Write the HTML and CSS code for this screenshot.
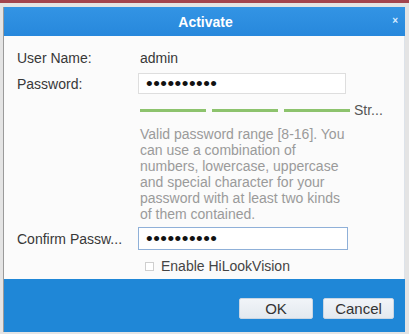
FILE: index.html
```html
<!DOCTYPE html>
<html>
<head>
<meta charset="utf-8">
<link rel="stylesheet" href="styles.css">
</head>
<body>
<div class="page">
  <div class="dialog">
    <div class="header">
      <span class="title">Activate</span>
      <span class="close">×</span>
    </div>
    <div class="content">
      <div class="row row-user">
        <span class="label">User Name:</span>
        <span class="value">admin</span>
      </div>
      <div class="row row-pass">
        <span class="label">Password:</span>
        <div class="input input-pass"><span class="dots">••••••••••</span></div>
      </div>
      <div class="row row-strength">
        <span class="label"></span>
        <div class="bars">
          <span class="bar"></span><span class="bar"></span><span class="bar"></span>
          <span class="str">Str...</span>
        </div>
      </div>
      <div class="row row-help">
        <span class="label"></span>
        <p class="help">Valid password range [8-16]. You<br>can use a combination of<br>numbers, lowercase, uppercase<br>and special character for your<br>password with at least two kinds<br>of them contained.</p>
      </div>
      <div class="row row-confirm">
        <span class="label">Confirm Passw...</span>
        <div class="input input-confirm"><span class="dots">••••••••••</span></div>
      </div>
      <div class="row row-enable">
        <span class="label"></span>
        <span class="check"></span>
        <span class="enable-text">Enable HiLookVision</span>
      </div>
    </div>
    <div class="footer">
      <button class="btn btn-ok">OK</button>
      <button class="btn btn-cancel">Cancel</button>
    </div>
  </div>
</div>
</body>
</html>
```

FILE: styles.css
```css
* { box-sizing: border-box; }
html, body {
  margin: 0;
  padding: 0;
  width: 409px;
  height: 334px;
  overflow: hidden;
  background: #d9d9d9;
  font-family: "Liberation Sans", Arial, sans-serif;
}
.page {
  width: 409px;
  height: 334px;
  border-top: 3px solid #a3444e;
  background: #e4e4e4;
  padding: 4px 4px 0 3px;
}
.dialog {
  width: 402px;
  border-left: 1px solid #9a9a9a;
  display: flex;
  flex-direction: column;
}
.header {
  height: 29px;
  background: linear-gradient(#3394e4, #2788dc);
  position: relative;
  display: flex;
  align-items: center;
  justify-content: center;
}
.title {
  color: #fff;
  font-weight: bold;
  font-size: 14px;
  margin-left: 2px;
}
.close {
  position: absolute;
  right: 7px;
  top: 9px;
  color: #d9ecff;
  font-size: 10px;
  font-weight: bold;
  line-height: 10px;
}
.content {
  height: 243px;
  background: #fbfbfb;
  border-right: 1px solid #dde3ea;
  padding: 11px 0 0 13px;
  color: #383838;
  font-size: 14px;
}
.row {
  display: flex;
  align-items: center;
}
.label {
  width: 121px;
  flex: none;
}
.row-user { height: 22px; }
.value { margin-left: 2px; }
.row-pass { margin-top: 4px; height: 21px; }
.input {
  height: 21px;
  background: #fff;
  border: 1px solid #dedede;
  display: flex;
  align-items: center;
  padding-left: 7px;
}
.input-pass { width: 208px; }
.input-confirm {
  width: 210px;
  height: 23px;
  border-color: #8fb0d8;
}
.dots {
  font-size: 19px;
  line-height: 10px;
  color: #111;
  letter-spacing: 0.5px;
}
.row-strength { margin-top: 9px; height: 14px; }
.bars {
  display: flex;
  align-items: center;
  margin-left: 2px;
}
.bar {
  width: 66px;
  height: 3px;
  background: #8dc36d;
  margin-right: 6px;
}
.str {
  margin-left: -2px;
  color: #555;
}
.row-help { margin-top: 9px; align-items: flex-start; }
.help {
  margin: 0 0 0 2px;
  color: #9a9a9a;
  line-height: 16px;
}
.row-confirm { margin-top: 5px; height: 23px; }
.row-enable { margin-top: 8px; height: 16px; }
.check {
  width: 9px;
  height: 9px;
  border: 1px solid #cfcfcf;
  background: #fff;
  margin-left: 7px;
}
.enable-text {
  margin-left: 7px;
  color: #444;
}
.footer {
  height: 53px;
  background: #1f87d7;
  display: flex;
  justify-content: flex-end;
  align-items: flex-start;
  padding: 19px 11px 0 0;
  gap: 10px;
}
.btn {
  height: 21px;
  border: 1px solid #c9d6e3;
  border-radius: 2px;
  background: linear-gradient(#f1f4f8, #e3e9ef);
  color: #333;
  font-family: "Liberation Sans", Arial, sans-serif;
  font-size: 15px;
  padding: 0;
}
.btn-ok { width: 74px; }
.btn-cancel { width: 71px; }
```
